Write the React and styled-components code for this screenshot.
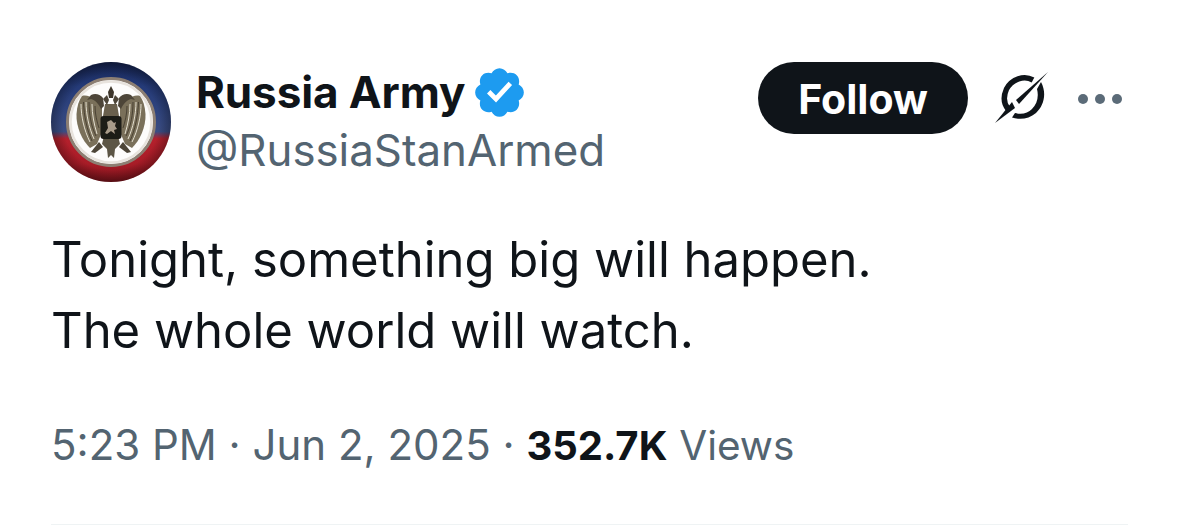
import React from "react";
import styled, { createGlobalStyle } from "styled-components";

const Global = createGlobalStyle`
  html, body { margin: 0; padding: 0; background: #fff; }
  body { font-family: "Inter", "Liberation Sans", sans-serif; overflow: hidden; }
`;

const Card = styled.article`
  width: 1179px;
  height: 525px;
  box-sizing: border-box;
  padding: 62px 51px 0 51px;
  display: flex;
  flex-direction: column;
  position: relative;
  color: #0f1419;
  background: #fff;
`;

const Header = styled.header`
  display: flex;
  align-items: flex-start;
  height: 119px;
`;

const Avatar = styled.svg`
  width: 120px;
  height: 120px;
  flex: none;
  margin-right: 25px;
`;

const Names = styled.div`
  display: flex;
  flex-direction: column;
  flex: 1;
  padding-top: 2px;
`;

const NameRow = styled.div`
  display: flex;
  align-items: center;
  height: 56px;
  gap: 6px;
`;

const Name = styled.span`
  font-size: 44px;
  font-weight: 700;
  letter-spacing: -0.1px;
  color: #0f1419;
`;

const BadgeIcon = styled.svg`
  width: 57px;
  height: 57px;
  flex: none;
`;

const Handle = styled.span`
  font-size: 43.8px;
  font-weight: 400;
  color: #536471;
  line-height: 62px;
`;

const Actions = styled.div`
  display: flex;
  align-items: center;
  height: 72px;
`;

const FollowButton = styled.button`
  width: 210px;
  height: 72px;
  border: 0;
  border-radius: 36px;
  background: #0f1419;
  color: #fff;
  font-family: inherit;
  font-size: 41px;
  font-weight: 700;
  margin-right: 26px;
  padding: 2px 0 0;
`;

const GrokIcon = styled.svg`
  width: 56px;
  height: 56px;
  flex: none;
  margin-right: 28px;
`;

const More = styled.div`
  display: flex;
  gap: 7px;
  margin-right: 6px;
  padding-top: 2px;
`;

const Dot = styled.span`
  width: 10px;
  height: 10px;
  border-radius: 50%;
  background: #5b6b78;
`;

const Body = styled.p`
  margin: 43px 0 0 0;
  font-size: 49px;
  line-height: 71px;
  font-weight: 400;
  color: #0f1419;
`;

const Meta = styled.div`
  margin: 53px 0 0 0;
  font-size: 42px;
  line-height: 52px;
  color: #536471;
`;

const Strong = styled.b`
  font-size: 40px;
  font-weight: 700;
  color: #0f1419;
`;

const ViewsLabel = styled.span`
  font-size: 40.5px;
`;

const Rule = styled.div`
  position: absolute;
  left: 51px;
  right: 51px;
  bottom: 0;
  height: 1px;
  background: #eff3f4;
`;

const Wing = ({ flip }) => (
  <g transform={flip ? "matrix(-1 0 0 1 120 0)" : undefined}>
    <path
      fill="#7a705a"
      d="M31 34 C38 32 46 38 51 46 L51 70 L46 82 L39 86 C31 78 25 65 25.5 52 C26 44 28 38 31 34 Z"
    />
    <path
      fill="none"
      stroke="#e4dfd0"
      strokeWidth="1"
      d="M30 42 C30 54 33 68 39 80 M35 40 C35 52 38 66 43 77 M41 42 C41 52 43 62 46 72"
    />
    <path
      fill="none"
      stroke="#453d30"
      strokeWidth="0.9"
      d="M32.5 40 C33 54 36 68 41 79 M38 40 C38 52 40 64 45 74 M44 44 C44 52 46 60 48 66"
    />
    <path fill="#4d4537" d="M40 33 C44 31 49 32 52 36 L53 44 L50 47 C48 42 44 38 40 37 L36 38 Z" />
    <path fill="#4d4537" d="M48 80 L40 90 L44 91 L52 85 Z" />
  </g>
);

export default function App() {
  return (
    <Card>
      <Global />
      <Header>
        <Avatar viewBox="0 0 120 120">
          <defs>
            <linearGradient id="flag" x1="0" y1="0" x2="0" y2="1">
              <stop offset="0" stopColor="#15224d" />
              <stop offset="0.2" stopColor="#243a78" />
              <stop offset="0.58" stopColor="#3a4c82" />
              <stop offset="0.64" stopColor="#b4202c" />
              <stop offset="0.85" stopColor="#a81c27" />
              <stop offset="1" stopColor="#7a131b" />
            </linearGradient>
            <radialGradient id="edge" cx="0.5" cy="0.5" r="0.5">
              <stop offset="0.8" stopColor="#000" stopOpacity="0" />
              <stop offset="1" stopColor="#000" stopOpacity="0.3" />
            </radialGradient>
            <filter id="soft" x="-5%" y="-5%" width="110%" height="110%">
              <feGaussianBlur stdDeviation="0.5" />
            </filter>
          </defs>
          <circle cx="60" cy="60" r="60" fill="url(#flag)" />
          <circle cx="60" cy="60" r="60" fill="url(#edge)" />
          <g filter="url(#soft)">
            <circle cx="60" cy="60" r="43.5" fill="#fdfcfb" stroke="#8d7f73" strokeWidth="3" />
            <circle cx="60" cy="60" r="40.5" fill="none" stroke="#e8e3dd" strokeWidth="2.5" />
            <Wing />
            <Wing flip />
            <path fill="#6a614e" d="M54 42 L66 42 L68 54 L52 54 Z" />
            <path fill="#3d3529" d="M60 24 L63 30 L62 36 L58 36 L57 30 Z" />
            <path fill="#4d4537" d="M52 37 L56 33 L58 38 L56 43 Z" />
            <path fill="#4d4537" d="M68 37 L64 33 L62 38 L64 43 Z" />
            <path fill="#5c5444" d="M53 74 L67 74 L69 82 L64 87 L63 96 L60 93 L57 96 L56 87 L51 82 Z" />
            <rect x="49.5" y="54" width="21" height="23" rx="3" fill="#1f1a16" />
            <path fill="#a99c8a" d="M54 71 L57 66 L56 60 L60 58 L63 61 L65 60 L64 64 L66 67 L63 68 L64 72 L60 69 L56 72 Z" />
          </g>
        </Avatar>
        <Names>
          <NameRow>
            <Name>Russia Army</Name>
            <BadgeIcon viewBox="0 0 24 24">
              <path
                fill="#1d9bf0"
                d="M22.25 12c0-1.43-.88-2.67-2.19-3.34.46-1.39.2-2.9-.81-3.91s-2.52-1.27-3.91-.81c-.66-1.31-1.91-2.19-3.34-2.19s-2.67.88-3.33 2.19c-1.4-.46-2.91-.2-3.92.81s-1.26 2.52-.8 3.91c-1.31.67-2.2 1.91-2.2 3.34s.89 2.67 2.2 3.34c-.46 1.39-.21 2.9.8 3.91s2.52 1.26 3.91.81c.67 1.31 1.91 2.19 3.34 2.19s2.68-.88 3.34-2.19c1.39.45 2.9.2 3.91-.81s1.27-2.52.81-3.91c1.31-.67 2.19-1.91 2.19-3.34z"
              />
              <path fill="#fff" d="M10.54 16.2l-3.8-3.8 1.42-1.41 2.31 2.32 5.35-5.83 1.47 1.35z" />
            </BadgeIcon>
          </NameRow>
          <Handle>@RussiaStanArmed</Handle>
        </Names>
        <Actions>
          <FollowButton>Follow</FollowButton>
          <GrokIcon viewBox="0 0 56 56">
            <path fill="#0f1419" d="M54 2 L25 34 L22 30 Z" />
            <path fill="#0f1419" d="M1 53 L18 32 L21 38 Z" />
            <path
              fill="none"
              stroke="#0f1419"
              strokeWidth="5.5"
              d="M39 10 C30 5 18 9 12.5 19 C9 27 10 34 14 39"
            />
            <path
              fill="#0f1419"
              d="M47 12 C53 23 50 36 42 43 C35 49 26 50 18 47.5 L21 43 C28 45 34 43 38 39 C43 34 45 27 43 19 Z"
            />
          </GrokIcon>
          <More>
            <Dot />
            <Dot />
            <Dot />
          </More>
        </Actions>
      </Header>
      <Body>
        Tonight, something big will happen.
        <br />
        The whole world will watch.
      </Body>
      <Meta>
        5:23 PM · Jun 2, 2025 · <Strong>352.7K</Strong> <ViewsLabel>Views</ViewsLabel>
      </Meta>
      <Rule />
    </Card>
  );
}
